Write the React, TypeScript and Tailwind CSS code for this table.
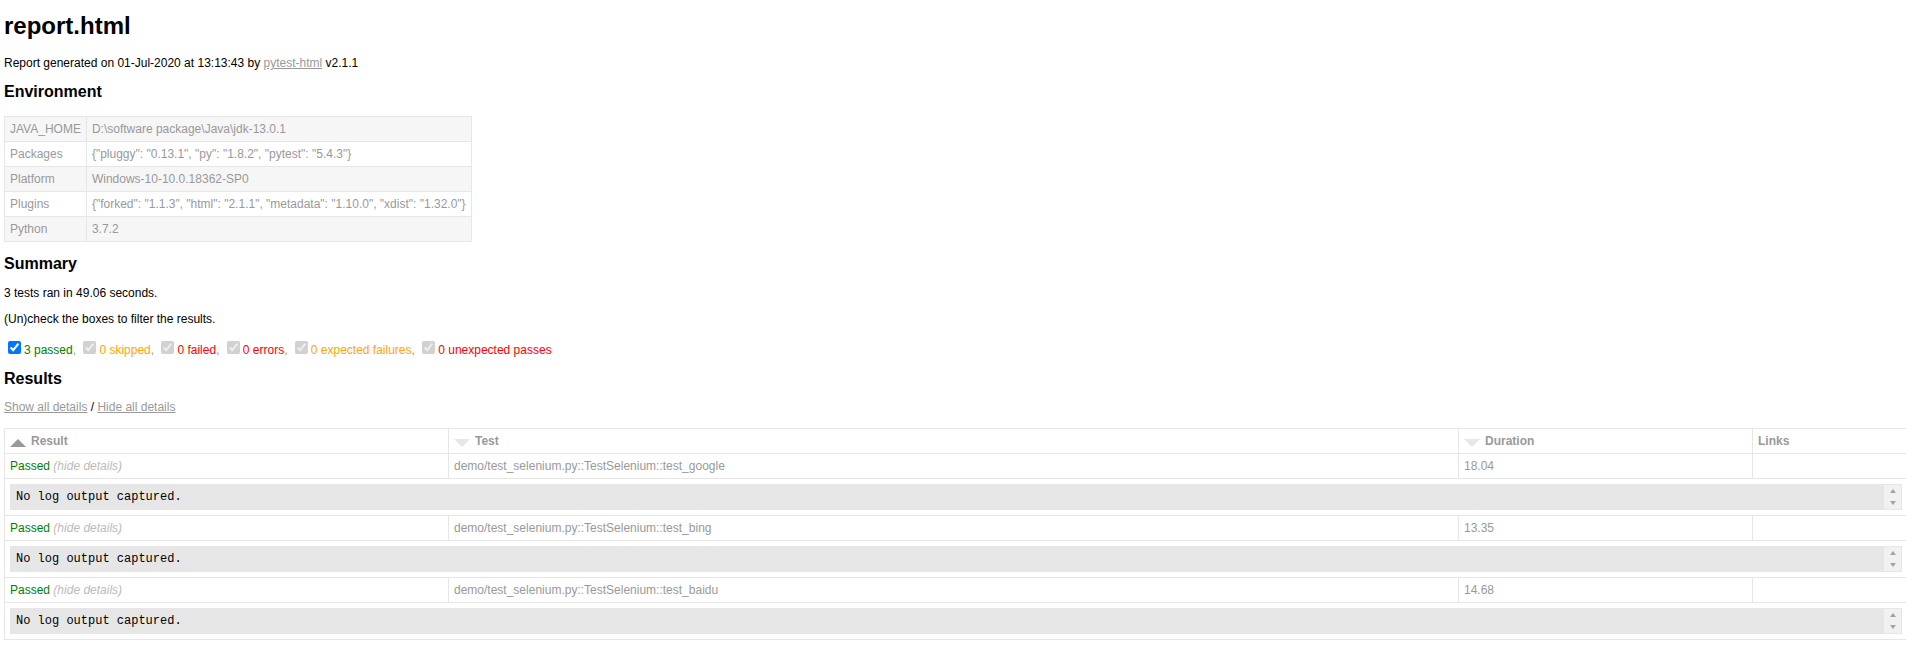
import React from 'react';

type TestRow = {
  name: string;
  duration: string;
};

const environment: [string, string][] = [
  ['JAVA_HOME', 'D:\\software package\\Java\\jdk-13.0.1'],
  ['Packages', '{"pluggy": "0.13.1", "py": "1.8.2", "pytest": "5.4.3"}'],
  ['Platform', 'Windows-10-10.0.18362-SP0'],
  ['Plugins', '{"forked": "1.1.3", "html": "2.1.1", "metadata": "1.10.0", "xdist": "1.32.0"}'],
  ['Python', '3.7.2'],
];

const filters = [
  { label: '3 passed', color: 'text-[#008000]', disabled: false },
  { label: '0 skipped', color: 'text-[#ffa500]', disabled: true },
  { label: '0 failed', color: 'text-[#ff0000]', disabled: true },
  { label: '0 errors', color: 'text-[#ff0000]', disabled: true },
  { label: '0 expected failures', color: 'text-[#ffa500]', disabled: true },
  { label: '0 unexpected passes', color: 'text-[#ff0000]', disabled: true },
];

const tests: TestRow[] = [
  { name: 'demo/test_selenium.py::TestSelenium::test_google', duration: '18.04' },
  { name: 'demo/test_selenium.py::TestSelenium::test_bing', duration: '13.35' },
  { name: 'demo/test_selenium.py::TestSelenium::test_baidu', duration: '14.68' },
];

const SortIcon: React.FC<{ active?: boolean }> = ({ active }) =>
  active ? (
    <span className="float-left mr-[5px] mt-[5px] w-0 h-0 border-x-[8px] border-x-transparent border-b-[8px] border-b-[#999]"></span>
  ) : (
    <span className="float-left mr-[5px] mt-[5px] w-0 h-0 border-x-[8px] border-x-transparent border-t-[8px] border-t-[#e6e6e6]"></span>
  );

// fake classic scrollbar, the log box always shows one
const LogBox: React.FC = () => (
  <div className="flex bg-[#e6e6e6] border border-[#e6e6e6] text-black">
    <div className="flex-1 p-[5px] font-['Liberation_Mono','Courier_New',monospace] whitespace-pre-wrap">
      No log output captured.
    </div>
    <div className="w-[17px] bg-[#f1f1f1] flex flex-col">
      <div className="flex-1 flex items-center justify-center">
        <span className="w-0 h-0 border-x-[3.5px] border-x-transparent border-b-[4px] border-b-[#a3a3a3]"></span>
      </div>
      <div className="flex-1 flex items-center justify-center">
        <span className="w-0 h-0 border-x-[3.5px] border-x-transparent border-t-[4px] border-t-[#a3a3a3]"></span>
      </div>
    </div>
  </div>
);

const App: React.FC = () => {
  return (
    <div className="w-[1906px] min-h-[668px] overflow-hidden bg-white pl-[4px] pb-[20px] font-['Liberation_Sans',Arial,Helvetica,sans-serif] text-[12px] leading-[normal] text-[#999]">
      <h1 className="pt-[12px] text-[24px] font-bold text-black">report.html</h1>
      <p className="mt-[16px] text-black">
        Report generated on 01-Jul-2020 at 13:13:43 by{' '}
        <a href="#" className="text-[#999] underline">pytest-html</a> v2.1.1
      </p>

      <h2 className="mt-[13px] text-[16px] font-bold text-black">Environment</h2>
      <table className="mt-[15px] border-collapse">
        <tbody>
          {environment.map(([key, value], i) => (
            <tr key={key} className={i % 2 === 0 ? 'bg-[#f6f6f6]' : 'bg-white'}>
              <td className="p-[5px] border border-[#e6e6e6] whitespace-nowrap">{key}</td>
              <td className="p-[5px] border border-[#e6e6e6] whitespace-nowrap">{value}</td>
            </tr>
          ))}
        </tbody>
      </table>

      <h2 className="mt-[13px] text-[16px] font-bold text-black">Summary</h2>
      <p className="mt-[13px] text-black">3 tests ran in 49.06 seconds. </p>
      <p className="mt-[12px] text-black">(Un)check the boxes to filter the results.</p>
      <div className="mt-[12px]">
        {filters.map((f, i) => (
          <React.Fragment key={f.label}>
            <input
              type="checkbox"
              checked
              readOnly
              disabled={f.disabled}
              className="mt-[3px] mr-[3px] mb-[3px] ml-[4px] align-baseline"
            />
            <span className={f.color}>{f.label}</span>
            {i < filters.length - 1 ? ', ' : ''}
          </React.Fragment>
        ))}
      </div>

      <h2 className="mt-[13px] text-[16px] font-bold text-black">Results</h2>
      <p className="mt-[12px] text-black">
        <a href="#" className="text-[#999] underline">Show all details</a>&nbsp;/&nbsp;
        <a href="#" className="text-[#999] underline">Hide all details</a>
      </p>

      <table className="mt-[14px] w-[1904px] table-fixed border-collapse border border-[#e6e6e6] text-[#999]">
        <colgroup>
          <col className="w-[444px]" />
          <col className="w-[1010px]" />
          <col className="w-[294px]" />
          <col />
        </colgroup>
        <thead>
          <tr>
            <th className="p-[5px] border border-[#e6e6e6] text-left font-bold">
              <SortIcon active />
              Result
            </th>
            <th className="p-[5px] border border-[#e6e6e6] text-left font-bold">
              <SortIcon />
              Test
            </th>
            <th className="p-[5px] border border-[#e6e6e6] text-left font-bold">
              <SortIcon />
              Duration
            </th>
            <th className="p-[5px] border border-[#e6e6e6] text-left font-bold">Links</th>
          </tr>
        </thead>
        {tests.map((t) => (
          <tbody key={t.name}>
            <tr>
              <td className="p-[5px] border border-[#e6e6e6]">
                <span className="text-[#008000]">Passed</span>
                <span className="italic text-[#bbb]"> (hide details)</span>
              </td>
              <td className="p-[5px] border border-[#e6e6e6]">{t.name}</td>
              <td className="p-[5px] border border-[#e6e6e6]">{t.duration}</td>
              <td className="p-[5px] border border-[#e6e6e6]"></td>
            </tr>
            <tr>
              <td colSpan={4} className="p-[5px] border border-[#e6e6e6]">
                <LogBox />
              </td>
            </tr>
          </tbody>
        ))}
      </table>
    </div>
  );
};

export default App;
